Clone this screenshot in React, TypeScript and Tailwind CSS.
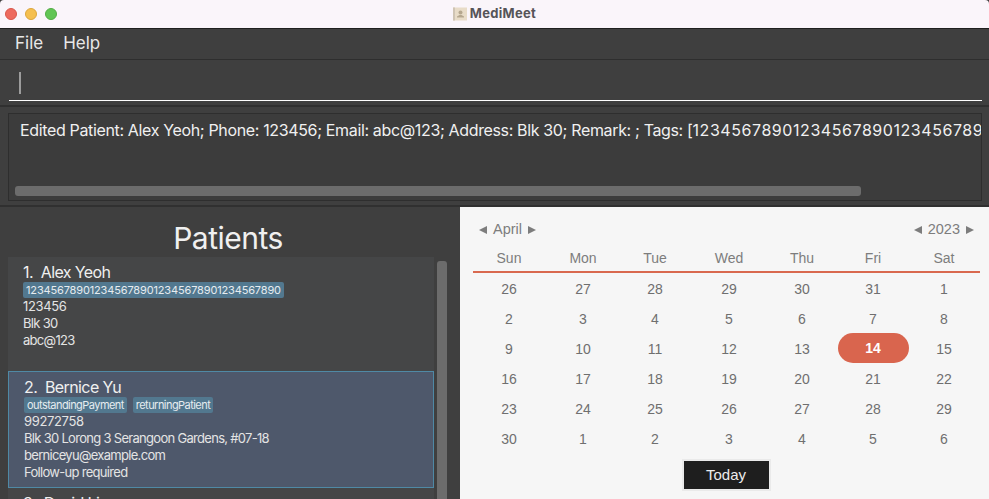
const weeks = [
  ['26', '27', '28', '29', '30', '31', '1'],
  ['2', '3', '4', '5', '6', '7', '8'],
  ['9', '10', '11', '12', '13', '14', '15'],
  ['16', '17', '18', '19', '20', '21', '22'],
  ['23', '24', '25', '26', '27', '28', '29'],
  ['30', '1', '2', '3', '4', '5', '6'],
];
const days = ['Sun', 'Mon', 'Tue', 'Wed', 'Thu', 'Fri', 'Sat'];

const Tag = ({ text, digits }: { text: string; digits?: boolean }) => (
  <span
    className={`h-4 px-[3px] rounded-[2px] bg-[#52788f] text-[11px] leading-4 text-[#e6ecf0] ${
      digits ? 'tracking-[-0.15px]' : 'tracking-[-0.55px]'
    }`}
  >
    {text}
  </span>
);

const Arrow = ({ left }: { left?: boolean }) => (
  <svg width="8" height="8" viewBox="0 0 8 8" className="fill-[#7d7d7d]">
    <path d={left ? 'M0 4 8 0v8z' : 'M8 4 0 0v8z'} />
  </svg>
);

const Line = ({ text, digits }: { text: string; digits?: boolean }) => (
  <div className={`h-[17px] leading-[17px] text-[13px] text-[#e4e4e4] ${digits ? 'tracking-[-0.35px]' : 'tracking-[-0.7px]'}`}>
    {text}
  </div>
);

const App = () => {
  return (
    <div className="w-[989px] h-[499px] overflow-hidden flex flex-col bg-[#3f3f3f] font-['Inter',sans-serif]">
      <div className="h-[28px] shrink-0 flex items-center bg-[#faf5fa] px-[5px] relative rounded-t-[4px]">
        <div className="flex gap-[8px]">
          <div className="w-3 h-3 rounded-full bg-[#ed6a5e] border border-[#d9564b]" />
          <div className="w-3 h-3 rounded-full bg-[#f5bf4f] border border-[#dca63c]" />
          <div className="w-3 h-3 rounded-full bg-[#61c554] border border-[#52ad45]" />
        </div>
        <div className="flex-1 flex justify-center items-center gap-[3px] pr-[52px]">
          <svg width="14" height="14" viewBox="0 0 14 14">
            <rect width="14" height="13" y="0.5" fill="#e8dcc8" />
            <rect width="2" height="13" y="0.5" fill="#cfc4b4" />
            <circle cx="7.5" cy="5.5" r="2" fill="#b5a78f" />
            <path d="M4 10.5h7V9.5L8.5 8h-2L4 9.5z" fill="#b5a78f" />
          </svg>
          <span className="text-[13px] font-bold text-[#565458] tracking-[0.3px]">MediMeet</span>
        </div>
      </div>

      <div className="h-[32px] shrink-0 flex items-center gap-[20px] pl-[15px] bg-[#3f3f3f] border-t border-b border-t-[#1f1f1f] border-b-[#2e2e2e] text-[17px] text-[#e8e8e8]">
        <span>File</span>
        <span>Help</span>
      </div>

      <div className="h-[47px] shrink-0 px-[9px] pr-[7px] pt-[12px] bg-[#3f3f3f] border-b-2 border-b-[#303030]">
        <div className="h-[29px] border-b border-b-white pl-[10px]">
          <div className="w-[2px] h-[22px] bg-[#9c9c9c]" />
        </div>
      </div>

      <div className="h-[100px] shrink-0 pt-[6px] pl-[8px] pr-[7px] bg-[#3f3f3f] border-b-2 border-b-[#303030]">
        <div className="h-[88px] border border-[#2e2e2e] bg-[#3c3c3c] flex flex-col overflow-hidden">
          <div className="pl-[11px] pt-[6px] h-[72px] whitespace-nowrap overflow-hidden text-[16px] leading-5 text-[#f0f0f0] tracking-[-0.35px]">
            Edited Patient: Alex Yeoh; Phone: 123456; Email: abc@123; Address: Blk 30; Remark: ; Tags: [
            <span className="tracking-[0.56px]">12345678901234567890123456789</span>
          </div>
          <div className="ml-[6px] w-[846px] h-[10px] rounded-[3px] bg-[#6c6c6c]" />
        </div>
      </div>

      <div className="flex-1 flex min-h-0">
        <div className="w-[460px] shrink-0 bg-[#3f3f3f] flex flex-col">
          <div className="h-[50px] shrink-0 pr-[4px] text-center text-[30px] leading-[62px] text-[#f0f0f0] tracking-[-0.5px]">
            Patients
          </div>
          <div className="flex-1 flex pl-[8px] gap-[3px] min-h-0">
            <div className="w-[426px] bg-[#454647] overflow-hidden">
              <div className="h-[114px] pl-[15px] pt-[6px]">
                <div className="text-[16px] leading-[18px] text-[#f0f0f0] tracking-[-0.6px]">1.&nbsp; Alex Yeoh</div>
                <div className="flex gap-[6px] mt-[1px]">
                  <Tag digits text="1234567890123456789012345678901234567890" />
                </div>
                <Line digits text="123456" />
                <Line text="Blk 30" />
                <Line text="abc@123" />
              </div>
              <div className="h-[117px] pl-[15px] pt-[6px] bg-[#4e586b] border border-[#4f89a5]">
                <div className="text-[16px] leading-[18px] text-[#f0f0f0] tracking-[-0.6px]">2.&nbsp; Bernice Yu</div>
                <div className="flex gap-[6px] mt-[1px]">
                  <Tag text="outstandingPayment" />
                  <Tag text="returningPatient" />
                </div>
                <Line digits text="99272758" />
                <Line text="Blk 30 Lorong 3 Serangoon Gardens, #07-18" />
                <Line text="berniceyu@example.com" />
                <Line text="Follow-up required" />
              </div>
              <div className="pl-[15px] pt-[6px] text-[16px] leading-[18px] text-[#f0f0f0] tracking-[-0.6px]">3.&nbsp; David Li</div>
            </div>
            <div className="w-[10px] mt-[4px] rounded-t-[3px] bg-[#6c6c6c]" />
          </div>
        </div>

        <div className="flex-1 bg-[#f6f6f6] pl-[13px] pr-[9px] font-['Liberation_Sans',sans-serif] text-[#6f6f6f]">
          <div className="h-[43px] flex items-center justify-between pl-[6px] pr-[6px] pt-[2px] text-[14.5px] text-[#7d7d7d]">
            <div className="flex items-center gap-[6px]">
              <Arrow left />
              <span>April</span>
              <Arrow />
            </div>
            <div className="flex items-center gap-[6px]">
              <Arrow left />
              <span>2023</span>
              <Arrow />
            </div>
          </div>
          <div className="h-[23px] border-b-2 border-b-[#d9694f]">
            <div className="grid grid-cols-[72px_76px_68px_80px_66px_76px_66px] text-[14px] leading-[16px] text-center text-[#7d7d7d]">
              {days.map(d => (
                <div key={d}>{d}</div>
              ))}
            </div>
          </div>
          <div className="grid grid-cols-[72px_76px_68px_80px_66px_76px_66px] auto-rows-[30px] pt-[1px] text-[14px] text-center">
            {weeks.flat().map((d, i) =>
              i === 19 ? (
                <div key={i} className="flex items-center justify-center pb-[2px]">
                  <span className="w-[71px] h-[30px] shrink-0 rounded-full bg-[#d9654e] text-white font-bold leading-[30px]">{d}</span>
                </div>
              ) : (
                <div key={i} className="leading-[30px]">
                  {d}
                </div>
              ),
            )}
          </div>
          <div className="flex justify-center pt-[5px] pr-[1px]">
            <div className="w-[89px] h-[32px] border-2 border-[#eaeaea] bg-[#1e1e1e] text-[#ececec] text-[15px] leading-[28px] text-center">
              Today
            </div>
          </div>
        </div>
      </div>
    </div>
  );
};

export default App;
